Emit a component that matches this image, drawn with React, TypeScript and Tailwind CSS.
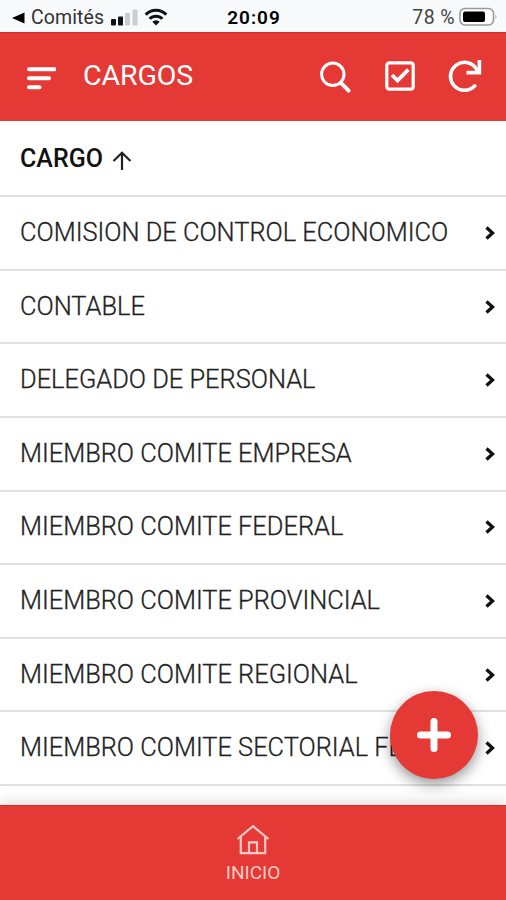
import type { ReactNode } from 'react';

const CARGOS = [
  'COMISION DE CONTROL ECONOMICO',
  'CONTABLE',
  'DELEGADO DE PERSONAL',
  'MIEMBRO COMITE EMPRESA',
  'MIEMBRO COMITE FEDERAL',
  'MIEMBRO COMITE PROVINCIAL',
  'MIEMBRO COMITE REGIONAL',
  'MIEMBRO COMITE SECTORIAL FED.',
];

function StatusBar() {
  return (
    <div className="grid h-8 shrink-0 grid-cols-[1fr_auto_1fr] items-center bg-[#f7f9fa] text-black">
      <div className="flex items-center pl-3">
        <svg width="13" height="12" viewBox="0 0 13 12" className="mt-0.5">
          <path d="M0 6 12.5 0.5v11z" fill="currentColor" />
        </svg>
        <span className="ml-1.5 mt-px w-[74px] whitespace-nowrap text-[19.5px] leading-8 tracking-[0.1px] text-[#333]">Comités</span>
        <svg width="27" height="17" viewBox="0 0 27 17" className="ml-1.5">
          <rect x="0" y="10" width="5" height="6.5" rx="1" fill="#111" />
          <rect x="7" y="7.5" width="5" height="9" rx="1" fill="#111" />
          <rect x="14" y="4" width="5" height="12.5" rx="1" fill="#ccc" />
          <rect x="21.5" y="0.5" width="5" height="16" rx="1" fill="#ccc" />
        </svg>
        <svg width="24" height="18" viewBox="0 0 24 18" className="ml-1.5 shrink-0">
          <path d="M1.7 6.6a14.6 14.6 0 0 1 20.6 0M5.6 10.8a9 9 0 0 1 12.8 0" fill="none" stroke="#111" strokeWidth="3" />
          <path d="M12 17.5 8.3 13.8a5.3 5.3 0 0 1 7.4 0z" fill="#111" />
        </svg>
      </div>
      <span className="mt-0.5 pl-0.5 text-[19px] font-semibold leading-8 tracking-[1px]">20:09</span>
      <div className="flex items-center justify-end pr-2">
        <span className="mt-px whitespace-nowrap text-[19.5px] leading-8 tracking-[0.4px] text-[#444]">78 %</span>
        <svg width="39" height="20" viewBox="0 0 39 20" className="ml-1">
          <rect x="1" y="1.5" width="33.5" height="16.5" rx="5" fill="#fff" stroke="#999" strokeWidth="1.6" />
          <rect x="4" y="4.5" width="22" height="10.5" rx="2" fill="#000" />
          <path d="M36.5 7.5q2 2.2 0 4.5z" fill="#999" />
        </svg>
      </div>
    </div>
  );
}

function IconButton({ label, children }: { label: string; children: ReactNode }) {
  return (
    <button type="button" aria-label={label} className="flex size-9 items-center justify-center">
      {children}
    </button>
  );
}

function Header() {
  return (
    <header className="flex h-[89px] shrink-0 items-center border-t border-[#d42a28] bg-[#e43935] pb-0.5 pl-[26px] pr-[23px] text-white">
      <svg width="30" height="24" viewBox="0 0 30 24" className="mt-[5px]">
        <path d="M3 2.2h25.5M3 11.2h20M3 20.2h10.5" stroke="currentColor" strokeWidth="4" strokeLinecap="round" />
      </svg>
      <h1 className="ml-[27px] text-[28.5px] leading-9 tracking-[-0.1px]">CARGOS</h1>
      <div className="ml-auto flex items-center gap-[29px]">
        <IconButton label="Buscar">
          <svg width="34" height="34" viewBox="0 0 34 34" fill="none" stroke="currentColor" className="mt-0.5">
            <circle cx="14.8" cy="14.3" r="11.2" strokeWidth="3" />
            <path d="m22.8 22.8 7.8 7.8" strokeWidth="4" strokeLinecap="round" />
          </svg>
        </IconButton>
        <IconButton label="Seleccionar">
          <svg width="30" height="30" viewBox="0 0 30 30" fill="none" stroke="currentColor">
            <rect x="1.8" y="1.8" width="26.4" height="26.4" rx="2.5" strokeWidth="3.2" />
            <path d="m7 14 5.5 5.5L23.3 8.7" strokeWidth="3.8" />
          </svg>
        </IconButton>
        <IconButton label="Actualizar">
          <svg width="34" height="34" viewBox="0 0 34 34" fill="none" stroke="currentColor" strokeWidth="3.6">
            <path d="M26.8 26.8A14 14 0 1 1 29 11" strokeLinecap="round" />
            <path d="M31.4 1v12.6H18.5" />
          </svg>
        </IconButton>
      </div>
    </header>
  );
}

function CargoRow({ name }: { name: string }) {
  return (
    <li className="flex h-[73.6px] shrink-0 items-center justify-between border-b-2 border-[#e0e0e0] pl-5 pr-[10px]">
      <span className="whitespace-nowrap pb-0.5 text-[25.4px] font-light leading-8 text-[#222] [-webkit-text-stroke:0.3px_#222]">
        {name}
      </span>
      <svg width="12" height="16" viewBox="0 0 12 16" className="shrink-0">
        <path d="m2.5 2.5 6 5.5-6 5.5" fill="none" stroke="#111" strokeWidth="3.3" />
      </svg>
    </li>
  );
}

export default function App() {
  return (
    <div className="relative flex h-[900px] w-[506px] flex-col overflow-hidden bg-white font-['Roboto',sans-serif]">
      <StatusBar />
      <Header />
      <main className="min-h-0 flex-1 overflow-hidden">
        <div className="flex h-[76.3px] items-center border-b-2 border-[#e0e0e0] pl-5">
          <span className="mt-0.5 text-[25px] font-medium leading-8 text-[#111]">CARGO</span>
          <svg width="20" height="20" viewBox="0 0 20 20" className="ml-[9px] mt-1.5">
            <path d="M10 19V2M1.5 10 10 1.8l8.5 8.2" fill="none" stroke="#222" strokeWidth="2.2" />
          </svg>
        </div>
        <ul>
          {CARGOS.map((name) => (
            <CargoRow key={name} name={name} />
          ))}
        </ul>
      </main>
      <nav className="z-10 flex h-[95px] shrink-0 flex-col items-center border-t border-[#d42a28] bg-[#e43935] pt-[18px] text-[#ffc9c4] shadow-[0_-2px_14px_rgba(0,0,0,0.16)]">
        <svg width="34" height="32" viewBox="0 0 34 32" fill="none" stroke="currentColor" strokeWidth="2.2">
          <path d="M1.5 15 17 2.2 32.5 15" />
          <path d="M4.8 12.5v16.7h24.4V12.5M13 29V18.3h8V29" />
        </svg>
        <span className="mt-[5px] text-[19px] leading-6">INICIO</span>
      </nav>
      <button
        type="button"
        aria-label="Añadir cargo"
        className="absolute bottom-[121px] right-[28px] z-20 flex size-[88px] items-center justify-center rounded-full bg-[#e43935] shadow-[0_5px_14px_rgba(0,0,0,0.42)]"
      >
        <svg width="34" height="34" viewBox="0 0 34 34">
          <path d="M17 3.5v27M3.5 17h27" stroke="#fff" strokeWidth="7" strokeLinecap="round" />
        </svg>
      </button>
    </div>
  );
}
